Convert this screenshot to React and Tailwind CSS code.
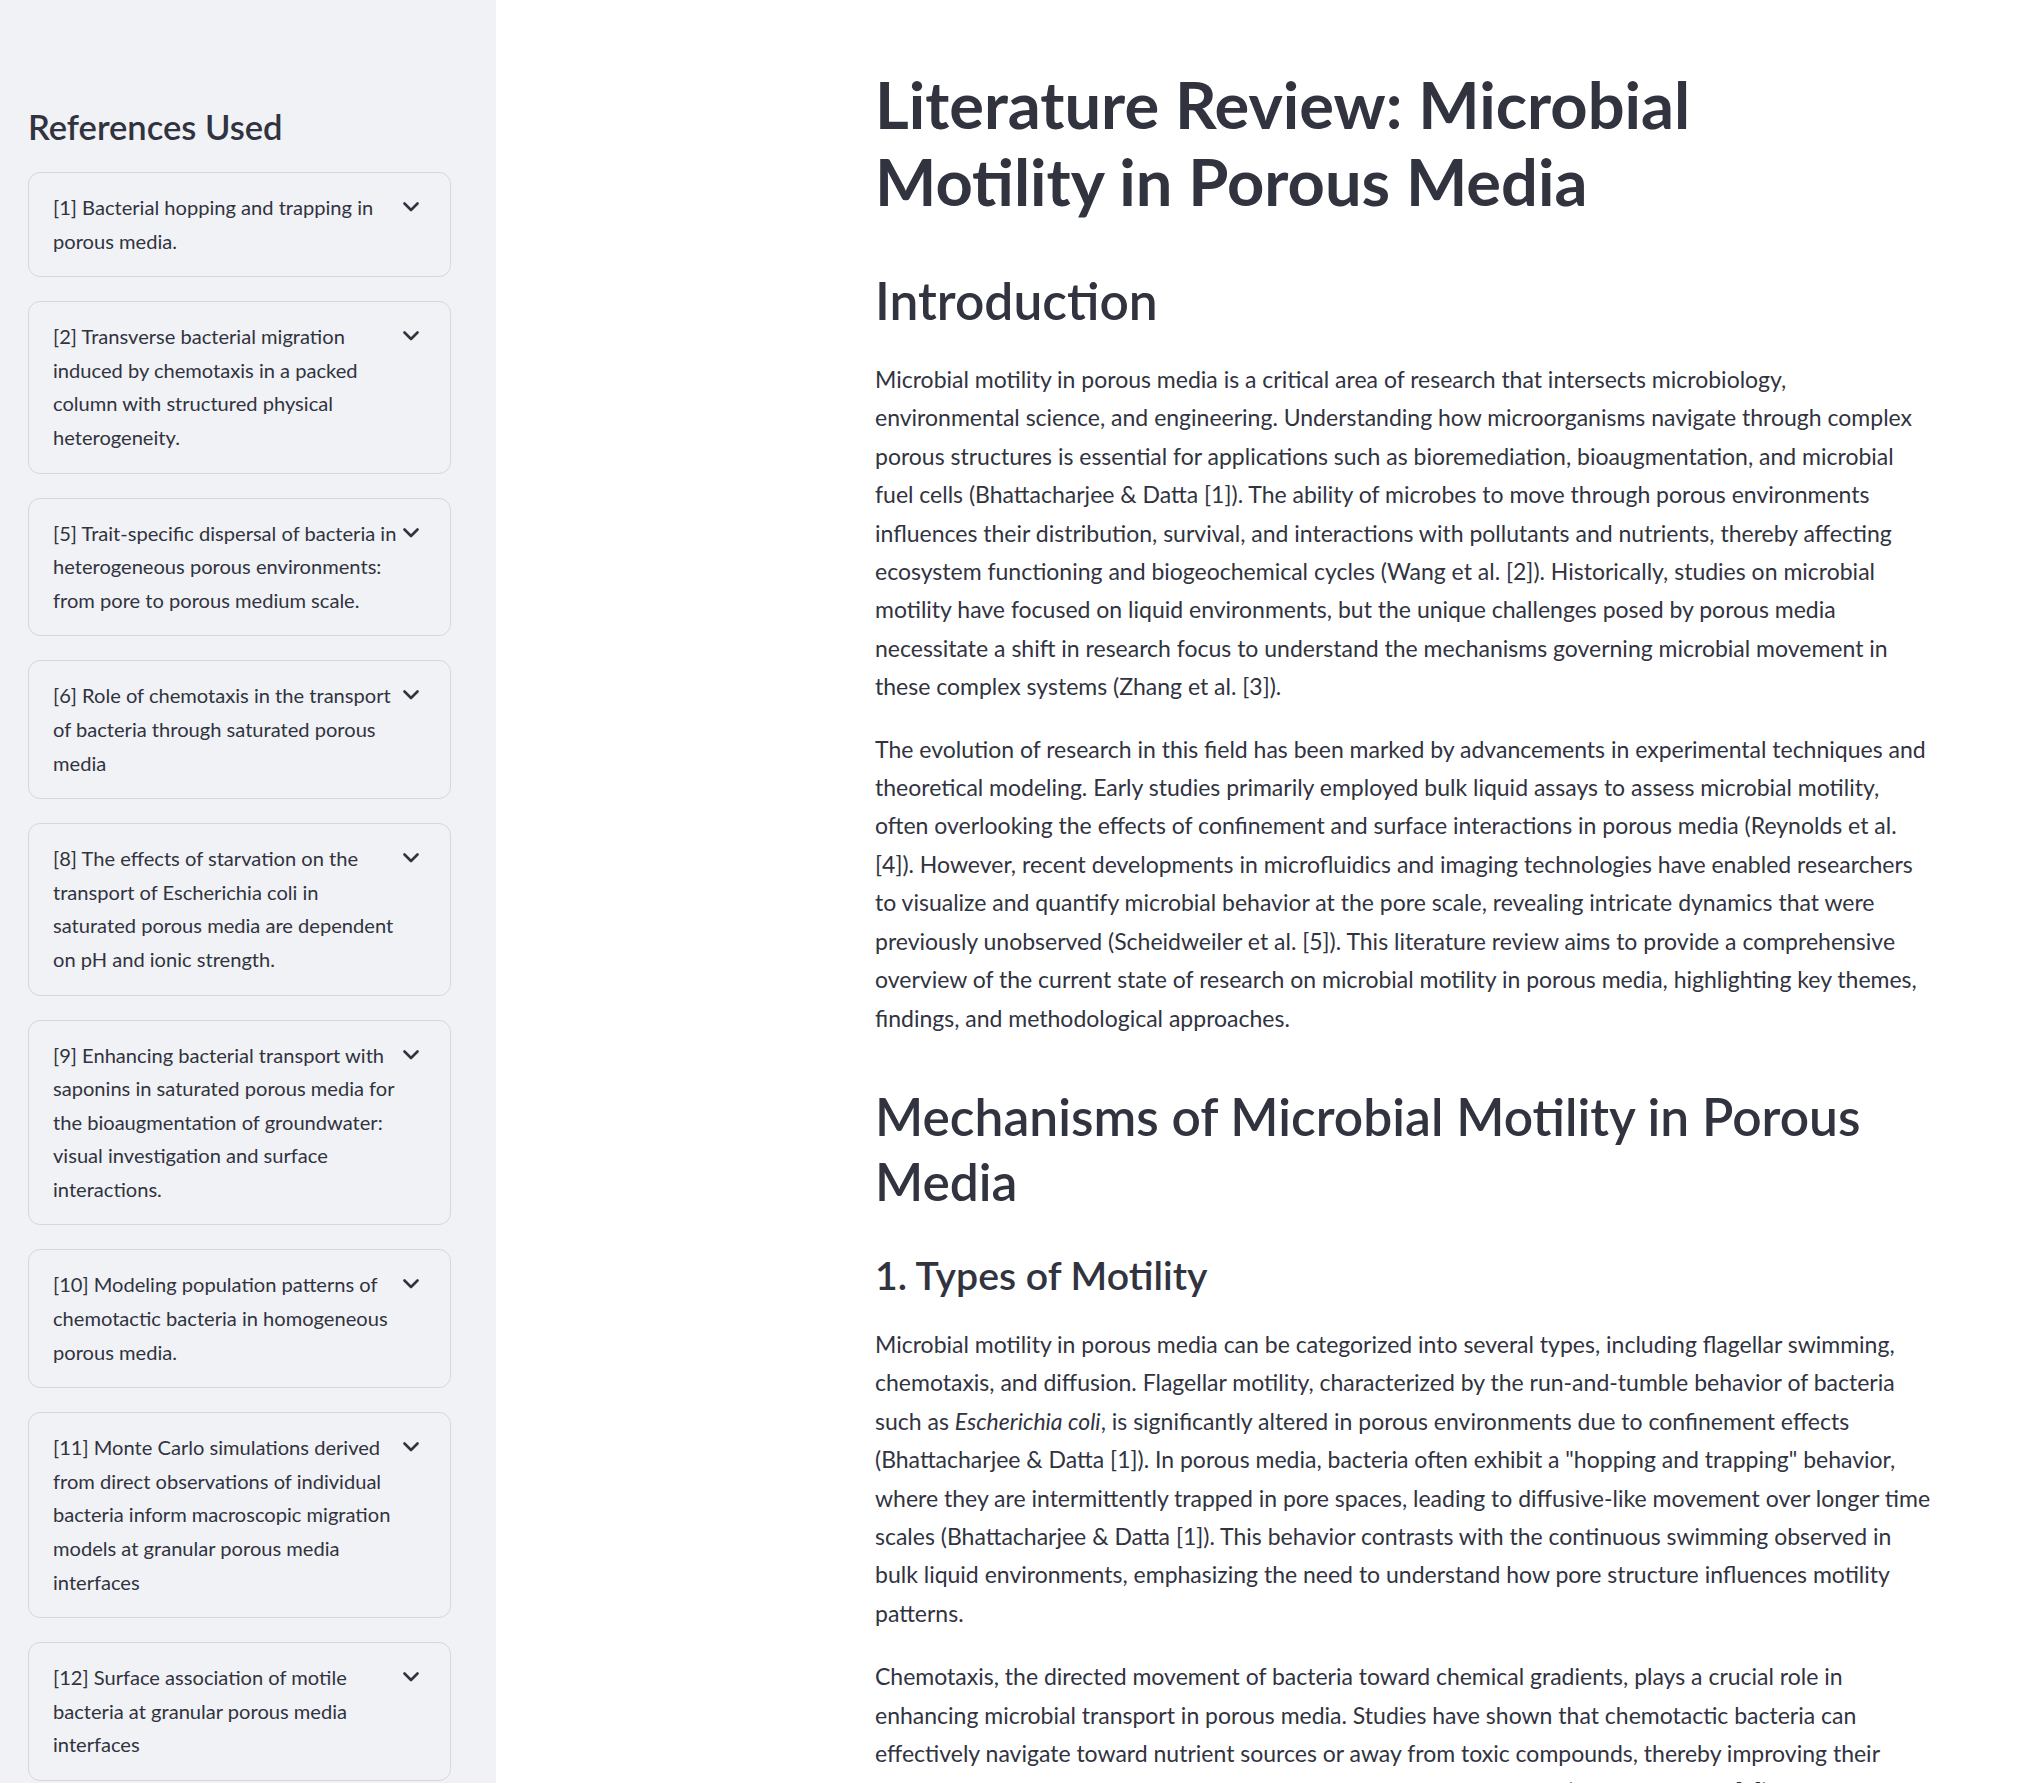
import React from "react";

const refs = [
  ["[1] Bacterial hopping and trapping in", "porous media."],
  [
    "[2] Transverse bacterial migration",
    "induced by chemotaxis in a packed",
    "column with structured physical",
    "heterogeneity.",
  ],
  [
    "[5] Trait-specific dispersal of bacteria in",
    "heterogeneous porous environments:",
    "from pore to porous medium scale.",
  ],
  [
    "[6] Role of chemotaxis in the transport",
    "of bacteria through saturated porous",
    "media",
  ],
  [
    "[8] The effects of starvation on the",
    "transport of Escherichia coli in",
    "saturated porous media are dependent",
    "on pH and ionic strength.",
  ],
  [
    "[9] Enhancing bacterial transport with",
    "saponins in saturated porous media for",
    "the bioaugmentation of groundwater:",
    "visual investigation and surface",
    "interactions.",
  ],
  [
    "[10] Modeling population patterns of",
    "chemotactic bacteria in homogeneous",
    "porous media.",
  ],
  [
    "[11] Monte Carlo simulations derived",
    "from direct observations of individual",
    "bacteria inform macroscopic migration",
    "models at granular porous media",
    "interfaces",
  ],
  [
    "[12] Surface association of motile",
    "bacteria at granular porous media",
    "interfaces",
  ],
];

const intro1 = [
  "Microbial motility in porous media is a critical area of research that intersects microbiology,",
  "environmental science, and engineering. Understanding how microorganisms navigate through complex",
  "porous structures is essential for applications such as bioremediation, bioaugmentation, and microbial",
  "fuel cells (Bhattacharjee & Datta [1]). The ability of microbes to move through porous environments",
  "influences their distribution, survival, and interactions with pollutants and nutrients, thereby affecting",
  "ecosystem functioning and biogeochemical cycles (Wang et al. [2]). Historically, studies on microbial",
  "motility have focused on liquid environments, but the unique challenges posed by porous media",
  "necessitate a shift in research focus to understand the mechanisms governing microbial movement in",
  "these complex systems (Zhang et al. [3]).",
];

const intro2 = [
  "The evolution of research in this field has been marked by advancements in experimental techniques and",
  "theoretical modeling. Early studies primarily employed bulk liquid assays to assess microbial motility,",
  "often overlooking the effects of confinement and surface interactions in porous media (Reynolds et al.",
  "[4]). However, recent developments in microfluidics and imaging technologies have enabled researchers",
  "to visualize and quantify microbial behavior at the pore scale, revealing intricate dynamics that were",
  "previously unobserved (Scheidweiler et al. [5]). This literature review aims to provide a comprehensive",
  "overview of the current state of research on microbial motility in porous media, highlighting key themes,",
  "findings, and methodological approaches.",
];

const types1 = [
  "Microbial motility in porous media can be categorized into several types, including flagellar swimming,",
  "chemotaxis, and diffusion. Flagellar motility, characterized by the run-and-tumble behavior of bacteria",
  <>
    such as <em>Escherichia coli</em>, is significantly altered in porous environments due to confinement effects
  </>,
  "(Bhattacharjee & Datta [1]). In porous media, bacteria often exhibit a \"hopping and trapping\" behavior,",
  "where they are intermittently trapped in pore spaces, leading to diffusive-like movement over longer time",
  "scales (Bhattacharjee & Datta [1]). This behavior contrasts with the continuous swimming observed in",
  "bulk liquid environments, emphasizing the need to understand how pore structure influences motility",
  "patterns.",
];

const types2 = [
  "Chemotaxis, the directed movement of bacteria toward chemical gradients, plays a crucial role in",
  "enhancing microbial transport in porous media. Studies have shown that chemotactic bacteria can",
  "effectively navigate toward nutrient sources or away from toxic compounds, thereby improving their",
  "survival and bioremediation potential in contaminated environments (Adadevoh et al. [6]). Moreover, the",
];

const Chevron = () => (
  <svg width="16" height="10" viewBox="0 0 16 10" className="mt-[11px] mr-[7px] shrink-0">
    <path d="M1.5 1.5 L8 8 L14.5 1.5" fill="none" stroke="#31333f" strokeWidth="2.6" strokeLinecap="round" strokeLinejoin="round" />
  </svg>
);

const Para = ({ lines, className = "" }) => (
  <p className={`text-[23px] leading-[38.4px] ${className}`}>
    {lines.map((line, i) => (
      <span key={i} className="block whitespace-nowrap">
        {line}
      </span>
    ))}
  </p>
);

export default function App() {
  return (
    <div className="flex h-screen overflow-hidden bg-white text-[#31333f] font-['Lato',sans-serif]">
      <aside className="w-[496px] shrink-0 bg-[#f0f2f6] pl-[28px] pr-[45px]">
        <h2 className="mt-[105px] text-[34.5px] leading-[43px] font-semibold">References Used</h2>
        <div className="mt-[24px] flex flex-col gap-[24px]">
          {refs.map((lines, i) => (
            <div
              key={i}
              className="flex items-start justify-between rounded-[12px] border border-[#d6d7dc] px-[24px] py-[18px]"
            >
              <div className="text-[20.1px] leading-[33.6px]">
                {lines.map((l, j) => (
                  <span key={j} className="block whitespace-nowrap">
                    {l}
                  </span>
                ))}
              </div>
              <Chevron />
            </div>
          ))}
        </div>
      </aside>

      <main className="flex-1 pl-[379px]">
        <h1 className="mt-[66px] text-[65px] leading-[77px] font-bold">
          Literature Review: Microbial
          <br />
          Motility in Porous Media
        </h1>
        <h2 className="mt-[48px] text-[51.5px] leading-[65px] font-semibold">Introduction</h2>
        <Para lines={intro1} className="mt-[27px]" />
        <Para lines={intro2} className="mt-[24px]" />
        <h2 className="mt-[47px] text-[51.5px] leading-[65px] font-semibold">
          Mechanisms of Microbial Motility in Porous
          <br />
          Media
        </h2>
        <h3 className="mt-[36px] text-[39.2px] leading-[50px] font-semibold">1. Types of Motility</h3>
        <Para lines={types1} className="mt-[25px]" />
        <Para lines={types2} className="mt-[25px]" />
      </main>
    </div>
  );
}
